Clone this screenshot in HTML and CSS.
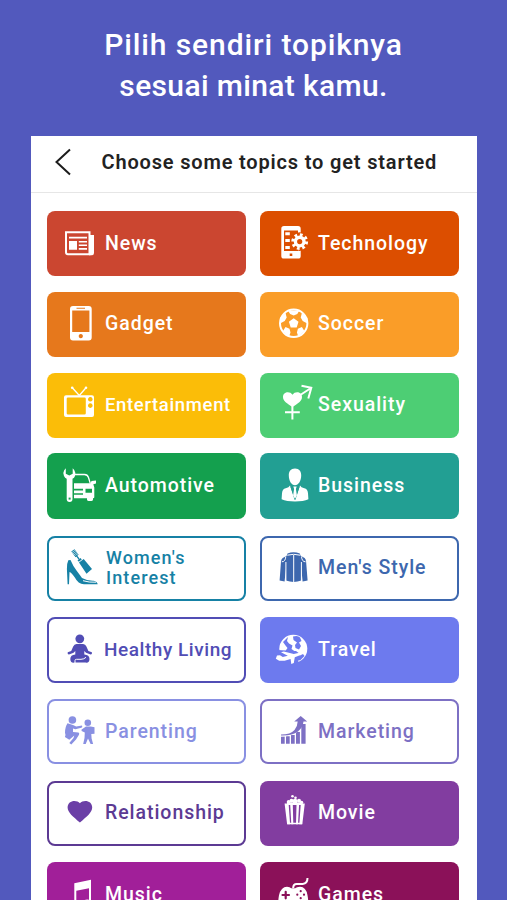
FILE: index.html
```html
<!DOCTYPE html>
<html lang="id">
<head>
    <meta charset="UTF-8">
    <meta name="viewport" content="width=device-width, initial-scale=1.0">
    <title>Choose Topics</title>
    <link rel="stylesheet" href="styles.css">
</head>
<body>

<h1>Pilih sendiri topiknya<br><span class="tight">sesuai minat kamu.</span></h1>

<div class="screen">
    <div class="top-bar">
        <svg class="back" viewBox="0 0 18 28"><path d="M16 1.5 2.5 14 16 26.500"/></svg>
        <h2>Choose some topics to get started</h2>
    </div>

    <div class="topics">
        <div class="topic news">
            <svg class="icon" viewBox="0 0 36 36">
                <path class="line" d="M4 6.300h23.500v22H6q-2 0-2-2z"/>
                <path d="M28 9h4v18q0 2.300-2.300 2.300H27z"/>
                <path d="M7 10.800h18v1.700H7zM7 15h8v8.700H7zM16.800 15H25v1.600h-8.200zM16.800 18.500H25v1.600h-8.200zM16.800 22H25v1.700h-8.200z"/>
            </svg>
            <span>News</span>
        </div>
        <div class="topic technology">
            <svg class="icon" viewBox="0 0 36 36">
                <path fill-rule="evenodd" d="M9 0h14q2.700 0 2.700 2.700v27.200q0 2.700-2.700 2.700H9q-2.700 0-2.700-2.700V2.700Q6.300 0 9 0zM9 4.500V25h14V4.500zM14.700 27.500v2.500h2.600v-2.500z"/>
                <path d="M10.300 6.200h4.500v3h-4.500zM10.300 13h4.500v3h-4.500zM10.300 20h4.500v3h-4.500z"/>
                <circle class="cut" cx="24.700" cy="15.600" r="9.300"/>
                <circle class="gear" cx="24.700" cy="15.600" r="6.700"/>
                <circle class="ring" cx="24.700" cy="15.600" r="4.300"/>
            </svg>
            <span>Technology</span>
        </div>
        <div class="topic gadget">
            <svg class="icon" viewBox="0 0 36 36">
                <path fill-rule="evenodd" d="M11 0h15.700q3 0 3 3v28.600q0 3-3 3H11q-3 0-3-3V3q0-3 3-3zM10.200 4.600V26h17.200V4.600zM14.500 1.800v1h8.500v-1zM18.800 28a2.100 2.100 0 1 0 .01 0z"/>
            </svg>
            <span>Gadget</span>
        </div>
        <div class="topic soccer">
            <svg class="icon" viewBox="0 0 36 36">
                <circle class="line" cx="18.700" cy="17.300" r="13.700"/>
                <path d="M18.700 12.300 23.500 15.800 21.700 21.400h-6L13.900 15.800zM13 4.600h11.400L22.300 8l-3.600 1.400L15.100 8zM5 12l5.500-5 1.200 4.500-2 3.500-4.200 2.200zM32.400 12l-5.500-5-1.200 4.500 2 3.500 4.200 2.200zM8 25l2.500-4 4 1.700 1 3.800-1.500 4.200zM29.400 25l-2.500-4-4 1.700-1 3.800 1.500 4.200z"/>
            </svg>
            <span>Soccer</span>
        </div>
        <div class="topic entertainment">
            <svg class="icon" viewBox="0 0 36 36">
                <path fill-rule="evenodd" d="M4 8.200h26q2 0 2 2V28q0 2-2 2H4q-2 0-2-2V10.200q0-2 2-2zM6 10.400q-1.300 0-1.300 1.300v14.500q0 1.300 1.300 1.300h16.500q1.300 0 1.300-1.300V11.700q0-1.300-1.300-1.300zM28.300 10a2.300 2.300 0 1 0 .01 0zM28.300 16.300a2.300 2.300 0 1 0 .01 0z"/>
                <path class="thin" d="M10.300.8 17.300 8.500 24 .8"/>
                <circle cx="10.200" cy=".7" r="1.300"/><circle cx="24" cy=".7" r="1.300"/>
            </svg>
            <span>Entertainment</span>
        </div>
        <div class="topic sexuality">
            <svg class="icon" viewBox="0 0 36 36">
                <path d="M17.500 20C12 16.500 8 14 8 10c0-5.500 7-6.200 9.500-2.300C20 3.800 27 4.500 27 10c0 4-4 6.500-9.500 10z"/>
                <path class="line" d="M17.400 18v14.600M10 25.300h14.800M24.500 8.500 36 1M26.500-1.200 36.300.8 33.300 11.600"/>
            </svg>
            <span>Sexuality</span>
        </div>
        <div class="topic automotive">
            <svg class="icon" viewBox="0 0 36 36">
                <path d="M3.800.3 2.200 2.300Q.5 5 2 8q.9 1.900 2.700 2.800V31a2.900 2.900 0 0 0 5.800 0V10.800Q12.300 9.900 13 8q1.200-3-.8-6L10.700.3v5.500L7.300 7.600 3.800 5.800z"/>
                <path class="cutdot" d="M7.600 29.600v2"/>
                <path class="thin" d="M13 6.500h9.500q3 0 4 3l1.800 6"/>
                <path fill-rule="evenodd" d="M12 15.300h16.500l1-2.300 4.500-.5v3l-2.700.8 1 3.200v9.800q0 1-1.300 1v1.200q0 1.500-3 1.500T25 31.500v-1.200H12v-3.500h9v-1.600h-9v-2.800h9v-1.600h-9zM23.500 20.800v4h6.500v-4z"/>
            </svg>
            <span>Automotive</span>
        </div>
        <div class="topic business">
            <svg class="icon" viewBox="0 0 36 36">
                <path d="M20 .4c4.300 0 6.300 3 6.200 7-.1 5.300-2.700 9.800-6.200 9.800s-6.100-4.500-6.200-9.800c-.1-4 1.900-7 6.200-7z"/>
                <path d="M15 17.500 20 31.800 25 17.500q1 2 4.300 2.700 3.300.7 3.700 5l.4 6q-5 2.200-13.400 2.200T6.600 31.200l.4-6q.4-4.300 3.700-5Q14 19.500 15 17.500z"/>
                <path class="cutline" d="M15.800 18.500 20 31.500l4.200-13"/>
                <path d="M18.300 18.500h3.400l-.8 2.500 1 6.500L20 30.800l-1.900-3.300 1-6.500z"/>
            </svg>
            <span>Business</span>
        </div>
    </div>

    <div class="topics lower">
        <div class="topic outline women">
            <svg class="icon" viewBox="0 0 36 36">
                <path d="M6.300 10.300 8.500 10q2.500 6 6 10.500 3.200 4.300 5.500 7.500 5.500 3 11.500 2.700 4 1 4.200 3.600H22q-6-.3-9-6.500Q9.500 22.500 7.500 22L7 34.300H5.600L4.900 19q-.3-5 1.400-8.700z"/>
                <path class="cutline" d="M21 30.700q6 1.900 13 1.500"/>
                <path d="m17 12.500 4.700-3.500L30 19l-5.500 4.800zM15.500 10.300l3-2.300 1.300 1.500-3 2.300z"/>
                <path class="thin" d="m17 9-3-3.800"/>
                <path class="bristle" d="m15 6-4.200-5.800"/>
            </svg>
            <span>Women's<br>Interest</span>
        </div>
        <div class="topic outline men">
            <svg class="icon" viewBox="0 0 36 36">
                <path d="M12.500 3.500q6-2.600 12.300 0l.8 2.200 4 2.200q1.300 1 1.500 3.600l1.500 19-5 1-1.300-13v12q-3.800 1.400-7.600 1.400t-7.800-1.400v-12l-1.300 13-5-1L6 11.500q.2-2.600 1.700-3.600l4-2.200z"/>
                <path class="cutline" d="M18.700 5v27M12.300 5.200q6.300-1.800 12.800 0M6.800 11.800q3.600 0 4-5.300M30.500 11.800q-3.600 0-4-5.300M10.900 12v19M26.400 12v19"/>
            </svg>
            <span>Men's Style</span>
        </div>
        <div class="topic outline healthy">
            <svg class="icon" viewBox="0 0 36 36">
                <circle cx="17.800" cy="6.800" r="4.400"/>
                <path d="M14.500 12h6.600q2.300 0 3.300 2.500l2 4.500 3.500 1.200q.5 2.300-1.300 2.200l-4.600-1.600-1.700-1.800v3.500q5.200.3 5.200 4.500t-4 3.600H12.300q-4 .6-4-3.600t5-4.500V19l-1.700 1.800L7 22.400q-1.800.1-1.300-2.200L9.200 19l2-4.500q1-2.500 3.300-2.500z"/>
                <path class="cutline" d="M13 31v-2.500q0-1.200 1.500-1.200h4.500q3 0 5-2"/>
            </svg>
            <span>Healthy Living</span>
        </div>
        <div class="topic travel">
            <svg class="icon" viewBox="0 0 36 36">
                <circle cx="18.300" cy="16.800" r="14"/>
                <path class="cut" d="M18 4.500q5-1.500 7 1l1.500 3.500-2.500 1.500 2 3.500-2 3.500-3.500-1.500-.5-3 2-2.500-3.500-2.500zM8 10l5-5-1 4 2 2.500 3.500 2-1 3.500 3.500 2.500-2 2.500-5-.5-3-2 2.500-3.500-2-2.500zM24 24l4-2 1.500 2-4.500 4.500-2.500-1zM2.500 18l18.500 1 4 3-2 9H9z"/>
                <path d="m2 23.500 3-.2 2.800 1.600 5-1.200L6 20.300l2.800-.9 10 2.500 5.500-1.200q2.200-.2 2 1-.2 1-2 1.800l-4.500 1.700-1 5.800-2.500.9-.7-5-6 1.800H4.200L.8 26.800z"/>
            </svg>
            <span>Travel</span>
        </div>
        <div class="topic outline parenting">
            <svg class="icon" viewBox="0 0 36 36">
                <circle cx="10.400" cy="6" r="3.800"/>
                <path d="M5.500 9.300 11 11l3.200 1.600 5.800-1.100q.9 1.700-.6 2.200l-6 1.600-2.400-.9V18l5.500.6q1.200.7.5 2.200l-3 4.700-4.700 5-2-1.600 4.200-5 .8-2.300-5 4.200-4.400-2.800.6-2L3 18.800q0-6 2.500-9.500z"/>
                <circle cx="25.800" cy="8.800" r="3.300"/>
                <path d="M24 12.500h4.800l3.700.8v6.500l-3.200.2.3 4.500 1.500 5.500h-2.500L26 24.500 23.700 30h-2.500l1.300-6 .3-5.500-3.200-1.600q-.5-1.900.8-1.900z"/>
            </svg>
            <span>Parenting</span>
        </div>
        <div class="topic outline marketing">
            <svg class="icon" viewBox="0 0 36 36">
                <path d="M6 22.500h3.700v7.200H6zM11 22.300h3.700v7.400H11zM16 21h3.700v8.700H16zM21 18h3.900v11.700H21zM26.300 10h4.300v19.700h-4.300z"/>
                <path class="cutline" d="M6 22q11.500 0 16-4.500 4-4.500 5-10"/>
                <path d="M6 20.500q9.500 0 13.500-4.500 3-3.500 3.200-8.500h-3.500L25.700 2l6.500 5.500h-3.700q-.7 6-5.500 10Q17 22 6 21.500z"/>
            </svg>
            <span>Marketing</span>
        </div>
        <div class="topic outline relationship">
            <svg class="icon" viewBox="0 0 36 36">
                <path d="M17.900 27.600C11 21.500 5.600 17.500 5.600 12.500c0-7.300 9-8.300 12.300-4.200 3.300-4.100 12.300-3.100 12.300 4.200 0 5-5.400 9-12.300 15.100z"/>
            </svg>
            <span>Relationship</span>
        </div>
        <div class="topic movie">
            <svg class="icon" viewBox="0 0 36 36">
                <path d="M9.600 8.500h4l1.500 20.800h-3zM15.200 9.500h2.600l.5 19.800h-2zM21.500 9.500h2.600L23 29.300h-2zM25.800 8.500h4l-2.500 20.800h-3z"/>
                <circle cx="13.700" cy="7" r="2"/><circle cx="16.500" cy="5.800" r="2"/><circle cx="20" cy="6.300" r="2.500"/><circle cx="24" cy="5.700" r="2"/><circle cx="26.500" cy="7.500" r="1.800"/>
                <circle cx="17.500" cy="1.300" r="1.300"/><circle cx="20.500" cy="2.800" r="1.300"/>
                <path d="M12 7.500h15V10H12zM12.300 27.800h14.800v1.500H12.300z"/>
            </svg>
            <span>Movie</span>
        </div>
        <div class="topic music">
            <svg class="icon" viewBox="0 0 36 36">
                <path fill-rule="evenodd" d="M12.300 6.200 29 2.800v22.700H27V11.200L14.300 13.800V29h-2z"/>
                <ellipse cx="10.500" cy="29" rx="4" ry="3"/><ellipse cx="25.200" cy="25.500" rx="4" ry="3"/>
            </svg>
            <span>Music</span>
        </div>
        <div class="topic games">
            <svg class="icon" viewBox="0 0 36 36">
                <path d="M12 9.800q3 0 4.200 1.500h4Q21.500 9.800 25 9.800q6 0 7.500 8.500 2 11-1.800 11.700-2.700.5-6.700-6H12.500q-4 6.500-6.700 6Q2 29.300 4 18.300q2-8.500 8-8.500z"/>
                <path class="line" d="M18.200 11q0-4 3.500-4h6Q32.500 6.500 32.500 1"/>
                <path class="cutthick" d="M7.500 18h6.500M10.700 14.800v6.500M25.700 14.200v.01M25.700 21.200v.01M22.300 17.700h.01M29 17.700h.01"/>
            </svg>
            <span>Games</span>
        </div>
    </div>
</div>

</body>
</html>
```
FILE: styles.css
```css
* {
    box-sizing: border-box;
}

body {
    font-family: Roboto, "Liberation Sans", sans-serif;
    background-color: #5259bd;
    margin: 0;
    height: 900px;
    overflow: hidden;
}

h1 {
    margin: 0;
    height: 136px;
    padding-top: 25px;
    font-size: 30px;
    font-weight: 500;
    line-height: 40.5px;
    letter-spacing: 0.9px;
    color: white;
    text-align: center;
}

.tight {
    letter-spacing: 0.35px;
}

.screen {
    width: 446px;
    height: 764px;
    margin-left: 30.5px;
    background-color: white;
    overflow: hidden;
}

.top-bar {
    display: flex;
    align-items: center;
    height: 57px;
    padding: 0 0 4px 23px;
    border-bottom: 1px solid #e6e6e6;
}

.back {
    width: 18px;
    height: 28px;
    fill: none;
    stroke: #1c1c1c;
    stroke-width: 2;
}

h2 {
    margin: 0 0 0 30px;
    font-size: 20px;
    font-weight: 600;
    letter-spacing: 0.83px;
    color: #222;
    white-space: nowrap;
}

.topics {
    display: grid;
    grid-template-columns: 199px 199px;
    grid-auto-rows: 65.4px;
    gap: 15.4px 14px;
    padding: 18px 0 0 16.5px;
}

.lower {
    row-gap: 16.3px;
    padding-top: 16.9px;
}

.topic {
    --bg: white;
    display: flex;
    align-items: center;
    padding-left: 15px;
    border-radius: 8px;
    background-color: var(--bg);
    color: white;
    font-size: 19.5px;
    font-weight: 500;
    line-height: 20px;
    letter-spacing: 0.95px;
    white-space: nowrap;
}

.topic span {
    margin-left: 7px;
}

.outline {
    border: 2px solid currentColor;
    padding-left: 13px;
}

.icon {
    flex: none;
    width: 36px;
    height: 36px;
    overflow: visible;
    fill: currentColor;
}

.line, .thin, .ring, .gear, .bristle {
    fill: none;
    stroke: currentColor;
    stroke-width: 2;
}

.thin {
    stroke-width: 1.3;
}

.ring {
    stroke-width: 3.4;
}

.gear {
    stroke-width: 3.4;
    stroke-dasharray: 2.63 2.63;
}

.bristle {
    stroke-width: 4;
    stroke-dasharray: 1 0.5;
}

.cut {
    fill: var(--bg);
}

.cutline, .cutthick, .cutdot {
    fill: none;
    stroke: var(--bg);
    stroke-width: 1;
}

.cutthick {
    stroke-width: 2.2;
    stroke-linecap: round;
}

.cutdot {
    stroke-width: 2;
}

.news { --bg: #cb4630; }
.technology { --bg: #dc4e00; }
.gadget { --bg: #e6781c; }
.soccer { --bg: #fa9d28; }
.entertainment { --bg: #fbbd08; }
.sexuality { --bg: #4dce74; }
.automotive { --bg: #14a04e; }
.business { --bg: #229f93; }
.women { color: #1681a5; }
.men { color: #3d67ae; }
.healthy { color: #514db5; }
.travel { --bg: #6d7aee; }
.parenting { color: #8990e2; }
.marketing { color: #7d70c4; }
.relationship { color: #5c3a93; }
.relationship .icon { color: #6b3fa6; }
.movie { --bg: #823da0; }
.music { --bg: #a11f99; }
.games { --bg: #8b1159; }

/* longer labels are set a little tighter */
.entertainment span {
    font-size: 18.5px;
    letter-spacing: 0.65px;
}

.healthy span {
    margin-left: 6px;
    font-size: 19px;
    letter-spacing: 0.55px;
}

.women span {
    margin-left: 8px;
    font-size: 18px;
    letter-spacing: 1.1px;
}
```
